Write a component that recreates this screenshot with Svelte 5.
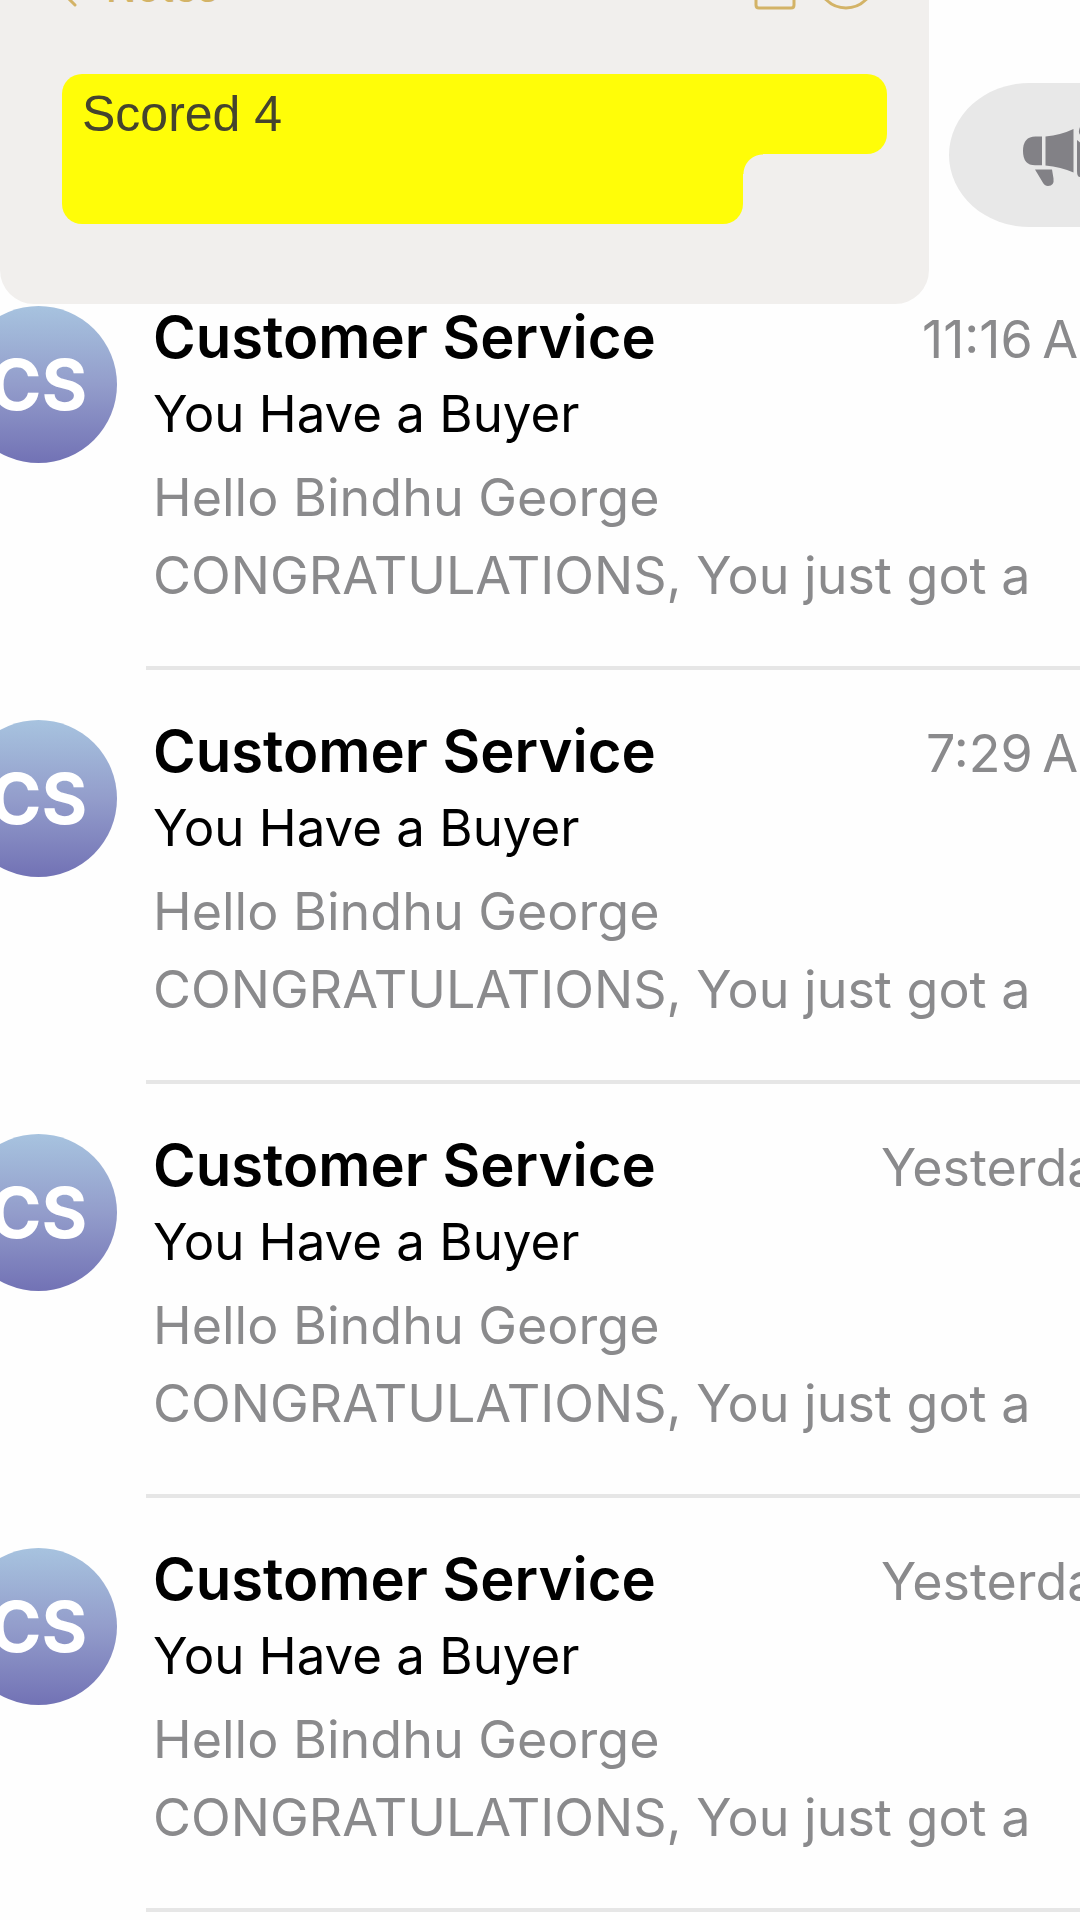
<script>
  const messages = [
    { id: 1, time: '11:16\u2009AM' },
    { id: 2, time: '7:29\u2009AM' },
    { id: 3, time: 'Yesterday' },
    { id: 4, time: 'Yesterday' },
  ].map((m) => ({
    ...m,
    initials: 'CS',
    sender: 'Customer Service',
    subject: 'You Have a Buyer',
    preview: ['Hello Bindhu George', 'CONGRATULATIONS, You just got a'],
  }))
</script>

<div class="page">
  <header>
    <section class="note">
      <div class="note-bar">
        <button class="back">
          <svg width="28" height="48" viewBox="0 0 28 48" fill="none" stroke="currentColor" stroke-width="3" stroke-linecap="round"><path d="M23 1L2 22l21 21"/></svg>
          <span>Notes</span>
        </button>
        <div class="note-actions">
          <button aria-label="Share">
            <svg width="42" height="58" viewBox="0 0 42 58" fill="none" stroke="currentColor" stroke-width="3" stroke-linecap="round"><path d="M14 20H5Q2 20 2 23v30q0 3 3 3h32q3 0 3-3V23q0-3-3-3h-9M21 38V3M12 12l9-9 9 9"/></svg>
          </button>
          <button aria-label="More">
            <svg width="60" height="60" viewBox="0 0 60 60" fill="none" stroke="currentColor" stroke-width="3"><circle cx="30" cy="30" r="28"/><path d="M18 30h1M30 30h1M42 30h1"/></svg>
          </button>
        </div>
      </div>
      <div class="highlight">
        <p>Scored 4</p>
        <div class="highlight-tail"></div>
      </div>
    </section>

    <button class="promo" aria-label="Promotions">
      <svg width="84" height="68" viewBox="0 0 84 68" fill="currentColor">
        <path d="M20 15.500h-6.500Q1 15.500 1 30t12.500 14.300H20zM23.500 15.500Q39 14 51.500 8v43.500Q39 46 23.500 44.500z"/>
        <path d="M13 48.500h17l1.500 9q1 7.500-5.500 7.500-3.500 0-5.500-4z"/>
        <path d="M55 19q6 4 6 11v18q0 8-3 8t-3-6zM58 6q-3 7 2 9l8-3q5-2 5-7t-6-5q-6 0-9 6z"/>
      </svg>
    </button>
  </header>

  <ul class="inbox">
    {#each messages as message (message.id)}
      <li>
        <div class="avatar">{message.initials}</div>
        <article>
          <div class="top-line">
            <h2>{message.sender}</h2>
            <time>{message.time}</time>
          </div>
          <p class="subject">{message.subject}</p>
          <div class="preview">
            {#each message.preview as line}
              <p>{line}</p>
            {/each}
          </div>
        </article>
      </li>
    {/each}
  </ul>
</div>

<style>
  :global(body) {
    background: #fefefe;
  }

  .page {
    overflow: hidden;
    display: flex;
    flex-direction: column;
    font-family: Inter, 'Liberation Sans', sans-serif;
    color: #000;
  }

  h2, p, ul {
    margin: 0;
    padding: 0;
  }

  button {
    display: flex;
    align-items: center;
    padding: 0;
    border: none;
    background: none;
    color: inherit;
    font: inherit;
    cursor: pointer;
  }

  svg {
    display: block;
    flex: none;
  }

  header {
    display: flex;
    gap: 20px;
    /* scrolled up: only the lower edge of the toolbar is in view */
    margin-top: -50px;
  }

  .note {
    flex: 1;
    padding: 0 42px 80px 62px;
    border-radius: 0 0 34px 34px;
    background: #f1efed;
  }

  .note-bar {
    display: flex;
    align-items: flex-end;
    justify-content: space-between;
    height: 60px;
    color: #d3b367;
  }

  .back {
    align-items: flex-end;
    gap: 26px;
    font-size: 40px;
    line-height: 44px;
    font-weight: 500;
  }

  .back svg {
    margin-left: -10px;
  }

  .note-actions {
    display: flex;
    align-items: flex-end;
    gap: 20px;
    margin-right: 11px;
  }

  .highlight {
    margin-top: 64px;
  }

  .highlight p {
    padding: 12px 20px;
    border-radius: 20px 20px 20px 0;
    background: #fffd08;
    color: #45442e;
    font-family: 'Liberation Sans', Arial, sans-serif;
    font-size: 50px;
    line-height: 56px;
  }

  .highlight-tail {
    position: relative;
    width: 82.500%;
    height: 70px;
    border-radius: 0 0 20px 20px;
    background: #fffd08;
  }

  /* rounded inner corner between the two highlighted lines */
  .highlight-tail::after {
    content: '';
    position: absolute;
    top: 0;
    left: 100%;
    width: 20px;
    height: 20px;
    background: radial-gradient(circle at 100% 100%, transparent 19px, #fffd08 20px);
  }

  .promo {
    flex: none;
    align-self: flex-end;
    width: 240px;
    height: 144px;
    margin: 0 -109px 77px 0;
    padding-left: 73px;
    border-radius: 80px / 72px;
    background: #e8e8e8;
    color: #828186;
  }

  .inbox {
    display: grid;
    gap: 48px;
    margin: 0 -45px 0 -40px;
    list-style: none;
  }

  li {
    display: flex;
    gap: 29px;
  }

  .avatar {
    display: flex;
    align-items: center;
    justify-content: center;
    flex: none;
    width: 157px;
    height: 157px;
    margin-top: 2px;
    border-radius: 50%;
    background: linear-gradient(#a7c3df, #939dcb 50%, #7272b5);
    color: #fff;
    font-size: 70px;
    font-weight: 700;
  }

  article {
    flex: 1;
    display: flex;
    flex-direction: column;
    gap: 6px;
    padding: 0 0 51px 7px;
    border-bottom: 4px solid #e6e6e6;
  }

  .top-line {
    display: flex;
    align-items: baseline;
    justify-content: space-between;
    height: 65px;
    white-space: nowrap;
  }

  h2 {
    font-size: 58px;
    line-height: 66px;
    font-weight: 600;
  }

  time {
    font-size: 52px;
    line-height: 66px;
    color: #8a8a8c;
  }

  .subject {
    font-size: 51px;
    line-height: 78px;
    white-space: nowrap;
  }

  .preview {
    font-size: 52px;
    line-height: 78px;
    color: #8a8a8c;
    white-space: nowrap;
  }
</style>
